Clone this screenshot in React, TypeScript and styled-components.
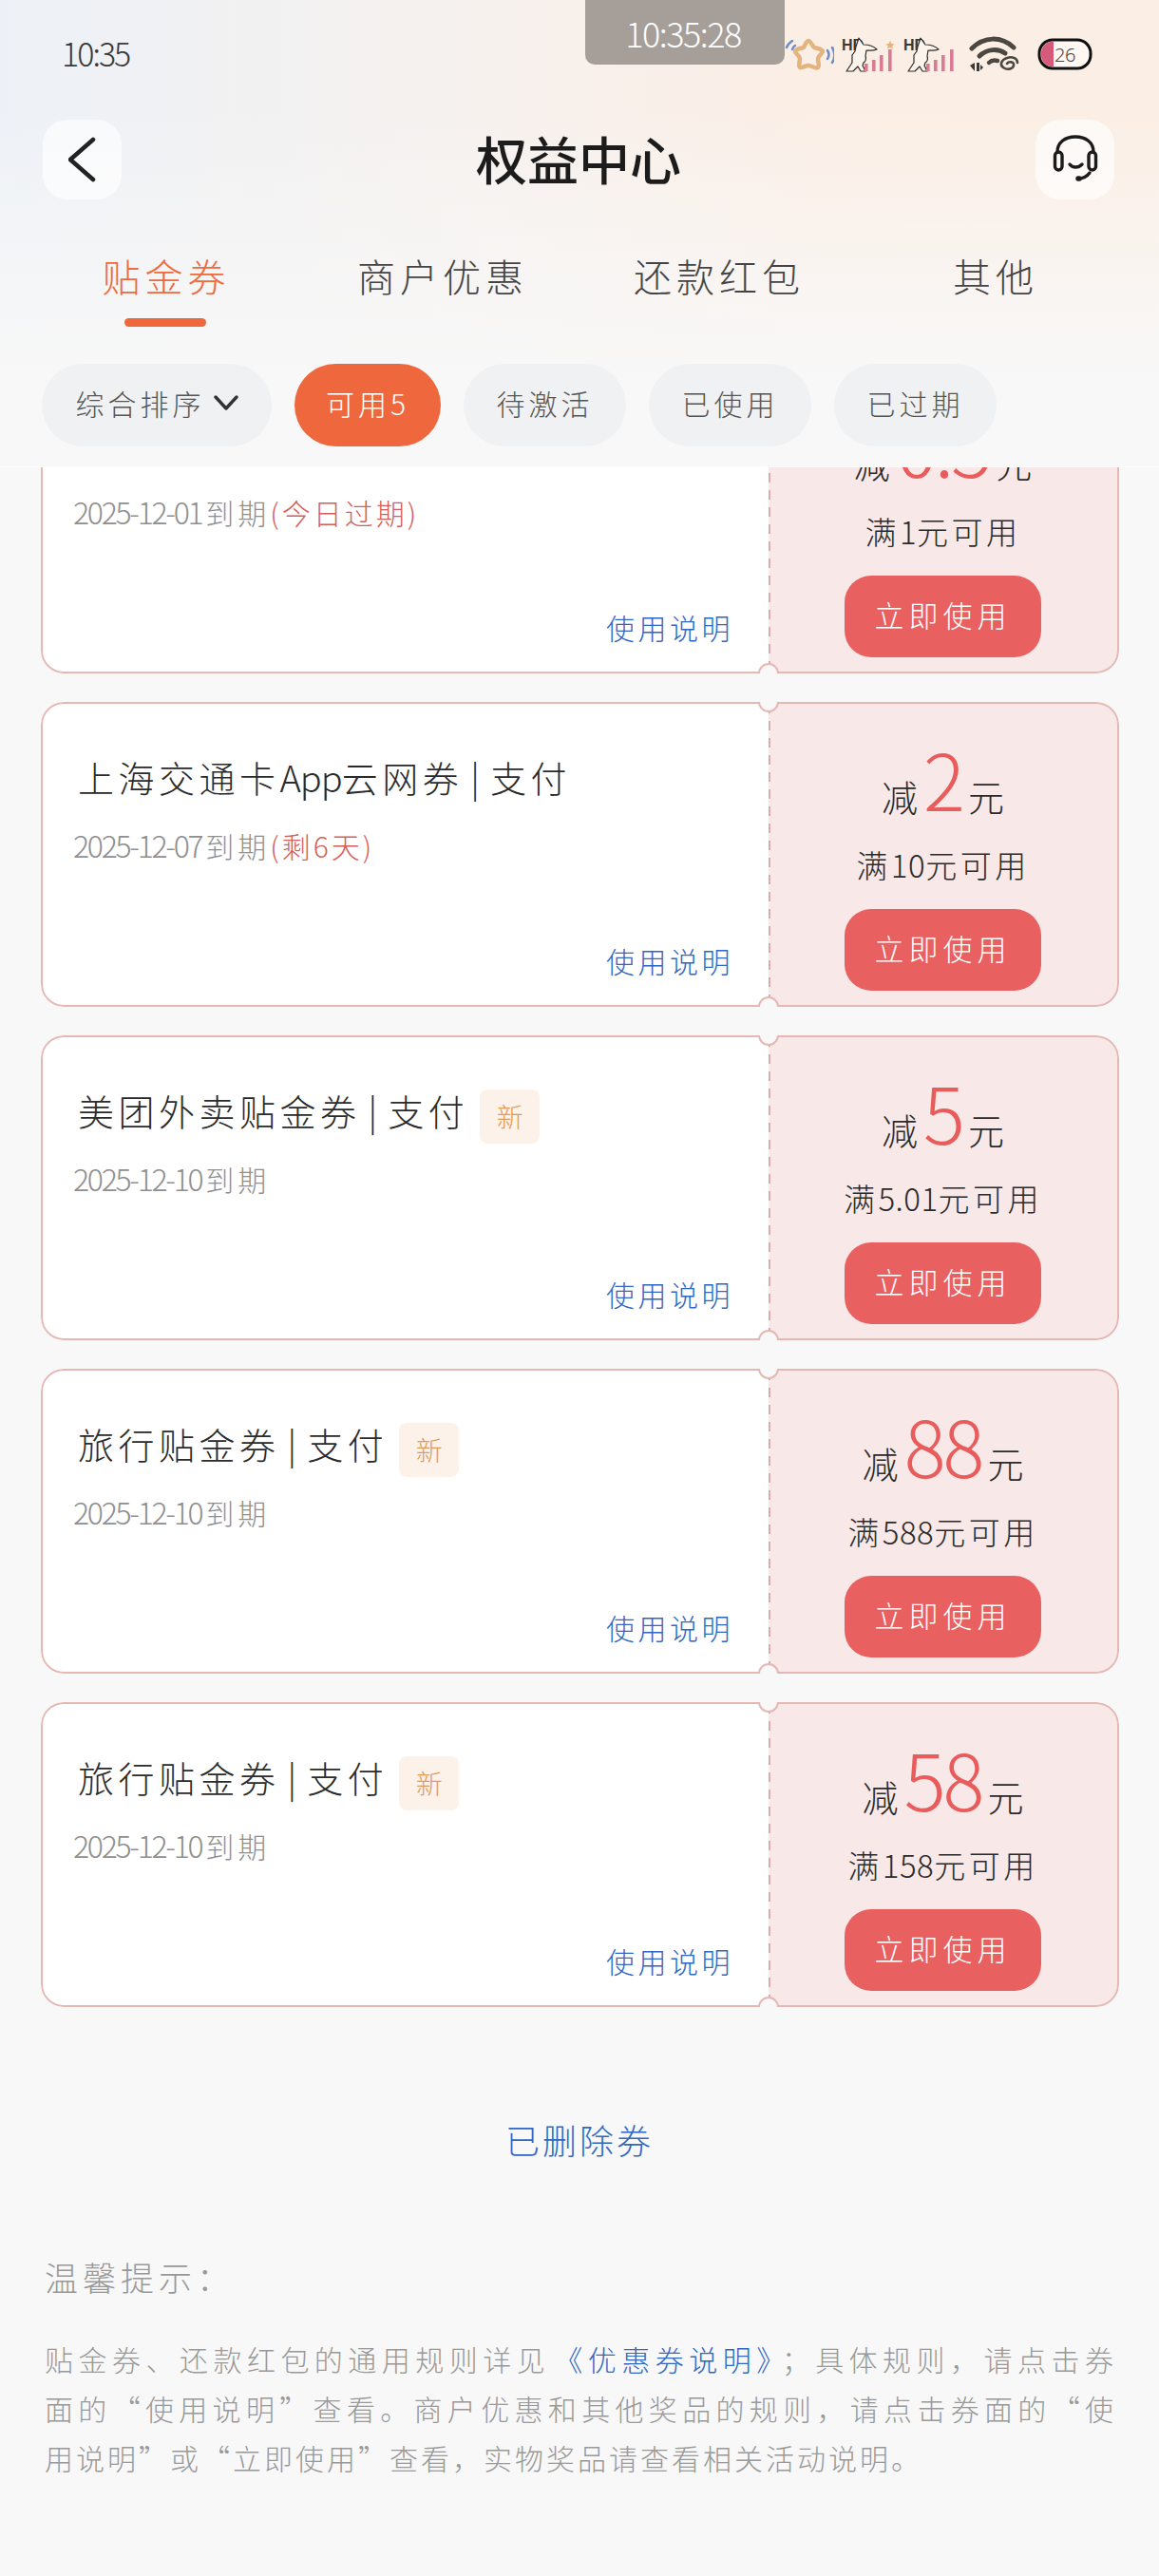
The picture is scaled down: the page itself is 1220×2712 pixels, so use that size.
import React from "react";
import styled, { createGlobalStyle } from "styled-components";

const HAND = `"Noto Sans CJK SC", "Noto Sans", sans-serif`;

const GlobalStyle = createGlobalStyle`
  html, body {
    margin: 0;
    padding: 0;
    background: #f8f8f8;
  }
  *, *::before, *::after {
    box-sizing: border-box;
  }
`;

const Page = styled.div`
  width: 1220px;
  height: 2712px;
  overflow: hidden;
  background: #f8f8f8;
  font-family: ${HAND};
  font-weight: 300;
  color: #2b2b2b;
`;

const Header = styled.header`
  position: relative;
  z-index: 2;
  height: 492px;
  display: flex;
  flex-direction: column;
  background:
    linear-gradient(180deg, rgba(248, 248, 248, 0) 0, rgba(248, 248, 248, 0) 110px, #f8f8f8 400px),
    linear-gradient(90deg, #edf1f7 0, #f6f1ee 40%, #fbeee5 70%, #fbeee4 100%);
  border-bottom: 1px solid #fdfdfd;
`;

const StatusBar = styled.div`
  display: grid;
  grid-template-columns: 616px 210px 1fr;
  height: 80px;
`;

const Clock = styled.div`
  padding: 36px 0 0 65px;
  font-size: 34px;
  line-height: 40px;
  letter-spacing: -2px;
  color: #3a3a3a;
`;

const RecordPill = styled.div`
  height: 68px;
  padding-right: 4px;
  border-radius: 0 0 10px 10px;
  background: #a59e99;
  color: #fff;
  font-size: 36px;
  line-height: 68px;
  letter-spacing: -1.5px;
  text-align: center;
`;

const StatusIcons = styled.div`
  display: flex;
  align-items: flex-start;
  padding-top: 38px;
`;

const StatusIcon = styled.svg<{ $gap?: number }>`
  display: block;
  flex: none;
  margin-left: ${(p) => p.$gap ?? 0}px;
`;

const Nav = styled.div`
  display: flex;
  align-items: center;
  justify-content: space-between;
  height: 84px;
  margin-top: 46px;
  padding: 0 47px 0 45px;
`;

const NavButton = styled.div`
  width: 83px;
  height: 84px;
  display: flex;
  align-items: center;
  justify-content: center;
  border-radius: 26px;
  background: rgba(255, 255, 255, 0.62);
`;

const PageTitle = styled.h1`
  margin: 0;
  padding-bottom: 3px;
  font-size: 54px;
  line-height: 81px;
  font-weight: 500;
  color: #1c1c1c;
`;

const Tabs = styled.nav`
  display: grid;
  grid-template-columns: repeat(4, 1fr);
  margin-top: 55px;
  padding: 0 28px;
`;

const Tab = styled.div<{ $active?: boolean }>`
  display: flex;
  flex-direction: column;
  align-items: center;
  gap: 20px;
  font-size: 40px;
  line-height: 50px;
  letter-spacing: 5px;
  text-indent: 3px;
  color: ${(p) => (p.$active ? "#ee6a3f" : "#444")};

  &::after {
    content: "";
    width: 86px;
    height: 9px;
    border-radius: 5px;
    background: ${(p) => (p.$active ? "#ef683d" : "transparent")};
  }
`;

const Chips = styled.div`
  display: flex;
  gap: 24px;
  margin-top: 39px;
  padding-left: 44px;
`;

const Chip = styled.div<{ $width: number; $active?: boolean }>`
  width: ${(p) => p.$width}px;
  height: 87px;
  padding-bottom: 5px;
  display: flex;
  align-items: center;
  justify-content: center;
  gap: 9px;
  border-radius: 44px;
  font-size: 30px;
  letter-spacing: 4px;
  background: ${(p) => (p.$active ? "#ef683d" : "#f0f1f3")};
  color: ${(p) => (p.$active ? "#fff" : "#555")};
`;

const CouponList = styled.section`
  display: flex;
  flex-direction: column;
  gap: 30px;
  margin-top: -104px;
  padding: 0 42px 0 43px;
`;

const Card = styled.article`
  position: relative;
  display: grid;
  grid-template-columns: 766px 369px;
  height: 321px;
  border-radius: 24px;
  overflow: hidden;

  &::before,
  &::after {
    content: "";
    position: absolute;
    left: 755px;
    width: 22px;
    height: 22px;
    border-radius: 50%;
    background: #f8f8f8;
    border: 2px solid #e5b8b4;
  }
  &::before {
    top: -11px;
  }
  &::after {
    bottom: -11px;
  }
`;

const CardBody = styled.div`
  display: flex;
  flex-direction: column;
  padding: 52px 37px 27px 37px;
  background: #fff;
  border: 2px solid #e5b8b4;
  border-right: 0;
  border-radius: 24px 0 0 24px;
`;

const TitleRow = styled.div`
  display: flex;
  align-items: center;
  gap: 12px;
  height: 50px;
`;

const CouponTitle = styled.h2`
  margin: 0;
  font-size: 38px;
  line-height: 50px;
  font-weight: 300;
  letter-spacing: 4.5px;
  color: #2b2b2b;
`;

const TitleLatin = styled.span`
  letter-spacing: -1px;
`;

const TitleSep = styled.span`
  margin: 0 11px 0 8px;
  letter-spacing: 0;
`;

const NewTag = styled.span`
  width: 63px;
  height: 57px;
  margin-top: 12px;
  display: flex;
  align-items: center;
  justify-content: center;
  border-radius: 8px;
  background: #fdf2e9;
  color: #e09a5a;
  font-size: 28px;
`;

const Expiry = styled.div`
  margin: 26px 0 0 -5px;
  font-size: 32px;
  line-height: 40px;
  color: #8f8f8f;
`;

const ExpiryDate = styled.span`
  letter-spacing: -2.3px;
`;

const Unit = styled.span`
  margin-left: 4px;
  font-size: 30px;
  letter-spacing: 4px;
`;

const Urgent = styled.span`
  font-size: 30px;
  letter-spacing: 3px;
  color: #d4605c;
`;

const RuleLink = styled.a`
  margin-top: auto;
  align-self: flex-end;
  font-size: 30px;
  line-height: 40px;
  letter-spacing: 3.5px;
  color: #3068c4;
`;

const Stub = styled.div`
  display: flex;
  flex-direction: column;
  align-items: center;
  justify-content: flex-end;
  padding-bottom: 15px;
  background:
    linear-gradient(#dcaab0 55%, transparent 0) left top / 2px 18px repeat-y,
    #f8e8e7;
  border: 2px solid #e5b8b4;
  border-left: 0;
  border-radius: 0 24px 24px 0;
`;

const Amount = styled.div`
  display: flex;
  align-items: baseline;
  gap: 6px;
  height: 80px;
  line-height: 80px;
  font-size: 38px;
  color: #2b2b2b;
`;

const AmountValue = styled.span`
  font-size: 82px;
  letter-spacing: -3px;
  color: #e85c5c;
`;

const MinSpend = styled.div`
  margin: 31px 0 27px;
  font-size: 33px;
  line-height: 40px;
  letter-spacing: 3.5px;
  color: #2b2b2b;
`;

const MinValue = styled.span`
  letter-spacing: 0.5px;
`;

const UseButton = styled.button`
  width: 207px;
  height: 86px;
  padding: 0 0 5px;
  border: 0;
  border-radius: 28px;
  background: #e96060;
  color: #fff;
  font-family: inherit;
  font-weight: 300;
  font-size: 31px;
  letter-spacing: 5px;
`;

const DeletedLink = styled.a`
  display: block;
  margin-top: 114px;
  text-align: center;
  font-size: 36px;
  line-height: 50px;
  letter-spacing: 3px;
  color: #3068c4;
`;

const Notes = styled.footer`
  padding: 95px 45px 0 47px;
  color: #999;
`;

const NotesTitle = styled.div`
  font-size: 35px;
  line-height: 50px;
  letter-spacing: 5px;
`;

const NotesBody = styled.div`
  margin-top: 35px;
`;

const NotesLine = styled.div<{ $justify?: boolean }>`
  font-size: 30px;
  line-height: 52px;
  letter-spacing: 3px;
  white-space: nowrap;
  text-align: ${(p) => (p.$justify ? "justify" : "left")};
  text-align-last: ${(p) => (p.$justify ? "justify" : "left")};
`;

const NotesLink = styled.span`
  margin: 0 6px 0 4px;
  color: #3068c4;
`;

const StarIcon = () => (
  <StatusIcon width="52" height="38" viewBox="0 0 52 38">
    <path
      d="M25 5c2 0 4 5 6 7 2 1 8 1 9 4 0 2-5 5-5 8 0 3 2 8 0 9-2 2-6-2-10-2-3 0-7 3-9 2-2-2 0-6 0-9 0-3-5-6-5-8 1-3 7-3 9-4 1-2 3-7 5-7z"
      fill="none"
      stroke="#e3b47e"
      strokeWidth="4.5"
      strokeLinejoin="round"
    />
    <path d="M2 12c1-3 3-5 6-7M8 14c1-2 1-3 3-4" fill="none" stroke="#6d8fc9" strokeWidth="2.5" strokeLinecap="round" />
    <path d="M45 15c2 3 2 6 0 9M50 12c3 5 3 11 0 16" fill="none" stroke="#6d8fc9" strokeWidth="2.5" strokeLinecap="round" />
  </StatusIcon>
);

const HdSignal = ({ star, gap }: { star?: boolean; gap?: number }) => (
  <StatusIcon width="56" height="38" viewBox="0 0 56 38" $gap={gap}>
    <text x="0" y="15" fontFamily="Liberation Sans" fontWeight="700" fontSize="16" fill="#3c3836">
      HD
    </text>
    <path
      d="M15 11l3-9 5 7c5 0 10 1 14 5-5 2-8 1-11 1l-1 6c1 3 1 5-2 7l-1 3 3 6h-5l-3-5-5 5H5l6-9 0-8 3-4z"
      fill="#fbf4ec"
      stroke="#2f2b28"
      strokeWidth="1.2"
      strokeLinejoin="round"
    />
    <rect x="24" y="29" width="3.6" height="8" fill="#d87c95" />
    <rect x="32" y="25" width="3.6" height="12" fill="#d87c95" />
    <rect x="40" y="20" width="3.6" height="17" fill="#d87c95" />
    <rect x="49" y="14" width="3.6" height="23" fill="#d87c95" />
    {star && <path d="M51 5l1.5 3 3 .4-2.2 2 .6 3-2.9-1.5-2.9 1.5.6-3-2.2-2 3-.4z" fill="#e3b47e" />}
  </StatusIcon>
);

const WifiIcon = () => (
  <StatusIcon width="54" height="38" viewBox="0 0 54 38" $gap={13}>
    <g fill="none" stroke="#4d4742" strokeLinecap="round">
      <path d="M3 13C16 0 34 0 47 12" strokeWidth="5" />
      <path d="M11 21c8-8 20-8 27-3" strokeWidth="5" />
      <path d="M21 28c3-3 6-3 9-2" strokeWidth="4.5" />
      <path d="M51 28c0-5-6-7-11-5-6 2-8 7-4 10s10 2 11-2-5-5-7-2" strokeWidth="2.6" />
    </g>
    <path d="M1 31l5-3v9zM8 28h3v9H8zM12 30l3 3-3 3z" fill="#3c3836" />
  </StatusIcon>
);

const BatteryIcon = () => (
  <StatusIcon width="58" height="36" viewBox="0 0 58 36" $gap={18}>
    <rect x="2" y="4" width="54" height="30" rx="14" fill="#fff8f2" stroke="#111" strokeWidth="3" />
    <path d="M14 6h3v26h-3A12 12 0 0 1 4 19 12 12 0 0 1 14 6z" fill="#d65a79" />
    <text x="18" y="27" fontFamily="Noto Sans" fontWeight="300" fontSize="20" letterSpacing="-0.5" fill="#444">
      26
    </text>
  </StatusIcon>
);

const BackIcon = () => (
  <svg width="30" height="48" viewBox="0 0 30 48" fill="none">
    <path d="M26 3L2 24l24 21" stroke="#222" strokeWidth="4.5" strokeLinecap="round" strokeLinejoin="round" />
  </svg>
);

const HeadsetIcon = () => (
  <svg width="50" height="52" viewBox="28 28 50 52" fill="none" stroke="#1b1b1b" strokeLinecap="round">
    <path d="M34 46c0-10 8-16 19-16s19 6 19 16" strokeWidth="3.4" />
    <rect x="31.5" y="46" width="7.5" height="19" rx="3.8" strokeWidth="3.4" />
    <rect x="67" y="46" width="7.5" height="19" rx="3.8" strokeWidth="3.4" />
    <path d="M47 59c3 4 9 4 13 0" strokeWidth="3.4" />
    <path d="M56 74c5 0 9-2 12-6" strokeWidth="3.4" />
    <path d="M56 74h1" strokeWidth="5.5" />
  </svg>
);

const ChevronIcon = () => (
  <svg width="26" height="16" viewBox="0 0 26 16" fill="none">
    <path d="M2 2l11 12L24 2" stroke="#333" strokeWidth="3.4" strokeLinecap="round" strokeLinejoin="round" />
  </svg>
);

type Coupon = {
  name?: React.ReactNode;
  date: string;
  note?: string;
  isNew?: boolean;
  amount: string;
  min: string;
};

const coupons: Coupon[] = [
  { date: "2025-12-01", note: "(今日过期)", amount: "0.5", min: "1" },
  {
    name: (
      <>
        上海交通卡<TitleLatin>App</TitleLatin>云网券
      </>
    ),
    date: "2025-12-07",
    note: "(剩6天)",
    amount: "2",
    min: "10",
  },
  { name: "美团外卖贴金券", date: "2025-12-10", isNew: true, amount: "5", min: "5.01" },
  { name: "旅行贴金券", date: "2025-12-10", isNew: true, amount: "88", min: "588" },
  { name: "旅行贴金券", date: "2025-12-10", isNew: true, amount: "58", min: "158" },
];

const tabs = ["贴金券", "商户优惠", "还款红包", "其他"];

export default function App() {
  return (
    <Page lang="zh-CN">
      <GlobalStyle />
      <Header>
        <StatusBar>
          <Clock>10:35</Clock>
          <RecordPill>10:35:28</RecordPill>
          <StatusIcons>
            <StarIcon />
            <HdSignal star gap={8} />
            <HdSignal gap={9} />
            <WifiIcon />
            <BatteryIcon />
          </StatusIcons>
        </StatusBar>
        <Nav>
          <NavButton>
            <BackIcon />
          </NavButton>
          <PageTitle>权益中心</PageTitle>
          <NavButton>
            <HeadsetIcon />
          </NavButton>
        </Nav>
        <Tabs>
          {tabs.map((t, i) => (
            <Tab key={t} $active={i === 0}>
              {t}
            </Tab>
          ))}
        </Tabs>
        <Chips>
          <Chip $width={242}>
            综合排序
            <ChevronIcon />
          </Chip>
          <Chip $width={154} $active>
            可用5
          </Chip>
          <Chip $width={171}>待激活</Chip>
          <Chip $width={171}>已使用</Chip>
          <Chip $width={171}>已过期</Chip>
        </Chips>
      </Header>

      <CouponList>
        {coupons.map((c, i) => (
          <Card key={i}>
            <CardBody>
              <TitleRow>
                {c.name && (
                  <CouponTitle>
                    {c.name}
                    <TitleSep>|</TitleSep>支付
                  </CouponTitle>
                )}
                {c.isNew && <NewTag>新</NewTag>}
              </TitleRow>
              <Expiry>
                <ExpiryDate>{c.date}</ExpiryDate>
                <Unit>到期</Unit>
                {c.note && <Urgent>{c.note}</Urgent>}
              </Expiry>
              <RuleLink>使用说明</RuleLink>
            </CardBody>
            <Stub>
              <Amount>
                减<AmountValue>{c.amount}</AmountValue>元
              </Amount>
              <MinSpend>
                满<MinValue>{c.min}</MinValue>元可用
              </MinSpend>
              <UseButton>立即使用</UseButton>
            </Stub>
          </Card>
        ))}
      </CouponList>

      <DeletedLink>已删除券</DeletedLink>

      <Notes>
        <NotesTitle>温馨提示：</NotesTitle>
        <NotesBody>
          <NotesLine $justify>
            贴金券、还款红包的通用规则详见<NotesLink>《优惠券说明》</NotesLink>；具体规则，请点击券
          </NotesLine>
          <NotesLine $justify>面的“使用说明”查看。商户优惠和其他奖品的规则，请点击券面的“使</NotesLine>
          <NotesLine>用说明”或“立即使用”查看，实物奖品请查看相关活动说明。</NotesLine>
        </NotesBody>
      </Notes>
    </Page>
  );
}
